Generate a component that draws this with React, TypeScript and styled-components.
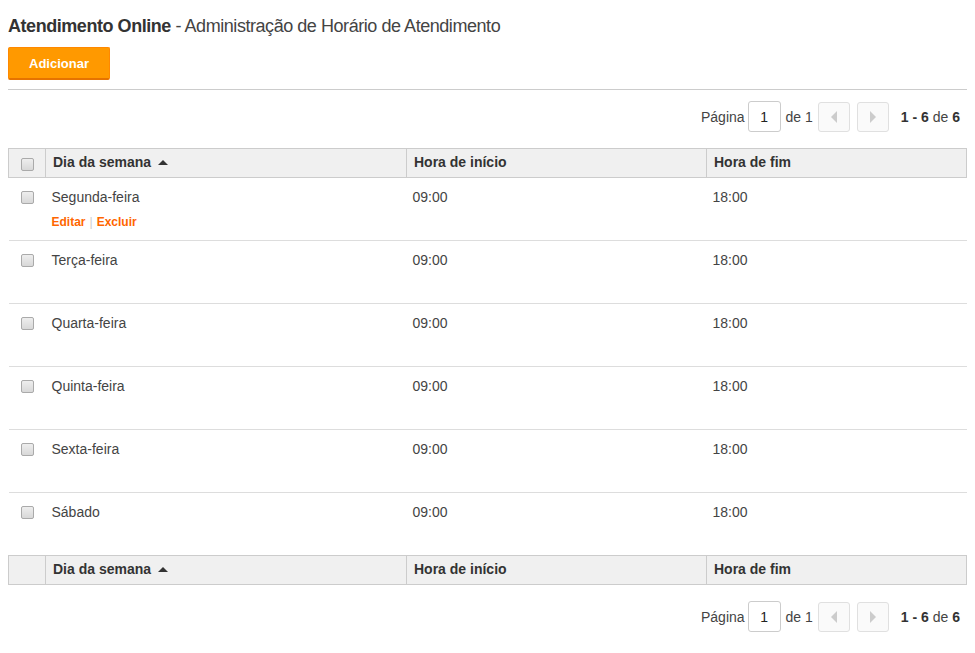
import React from "react";
import styled, { createGlobalStyle } from "styled-components";

const Global = createGlobalStyle`
  body {
    margin: 8px;
    font-family: "Liberation Sans", Arial, sans-serif;
    color: #444;
    background: #fff;
  }
`;

const Title = styled.h1`
  margin: 7px 0 0;
  font-size: 18px;
  font-weight: normal;
  line-height: 22px;
  color: #444;
  letter-spacing: -0.45px;
  b { font-weight: bold; color: #333; }
`;

const AddButton = styled.button`
  margin-top: 10px;
  width: 102px;
  height: 33px;
  background: #f90;
  border: 1px solid #f80;
  border-bottom: 2px solid #e67300;
  border-radius: 2px;
  color: #fff;
  font-family: "Liberation Sans", Arial, sans-serif;
  font-weight: bold;
  font-size: 13px;
  padding: 0;
  display: block;
`;

const Divider = styled.hr`
  margin: 9px 0 0;
  border: 0;
  border-top: 1px solid #ccc;
`;

const Pager = styled.div<{ $top: number }>`
  display: flex;
  justify-content: flex-end;
  align-items: center;
  gap: 4px;
  margin-top: ${p => p.$top}px;
  padding-right: 7px;
  font-size: 14px;
  color: #444;
  height: 31px;
`;

const PageLabel = styled.span`
  margin-right: -1px;
`;

const PageInput = styled.div`
  width: 31px;
  height: 29px;
  border: 1px solid #ccc;
  border-radius: 3px;
  display: flex;
  align-items: center;
  justify-content: center;
  color: #222;
  font-size: 14px;
  margin-right: 1px;
`;

const NavButton = styled.div<{ $gap?: number }>`
  width: 30px;
  height: 28px;
  border: 1px solid #e0e0e0;
  border-radius: 3px;
  background: #fafafa;
  display: flex;
  align-items: center;
  justify-content: center;
  margin-left: ${p => p.$gap ?? 0}px;
`;

const Count = styled.span`
  margin-left: 8px;
  b { font-weight: bold; color: #333; }
`;

const Table = styled.table`
  width: 100%;
  border-collapse: collapse;
  table-layout: fixed;
  margin-top: 16px;
`;

const Th = styled.th`
  background: #f0f0f0;
  border: 1px solid #ccc;
  height: 28px;
  padding: 0 7px;
  text-align: left;
  font-size: 14px;
  font-weight: bold;
  color: #333;
  vertical-align: top;
  line-height: 26px;
`;

const ThCheck = styled(Th)`
  padding: 0;
  text-align: center;
  vertical-align: middle;
`;

const Tr = styled.tr`
  border-bottom: 1px solid #ddd;
  &:last-child { border-bottom: 0; }
`;

const Td = styled.td`
  height: 51px;
  padding: 11px 6px 0;
  vertical-align: top;
  font-size: 14px;
  line-height: 17px;
  color: #444;
`;

const TdCheck = styled(Td)`
  height: 52px;
  padding: 10px 0 0;
  text-align: center;
`;

const Check = styled.span`
  display: inline-block;
  width: 11px;
  height: 11px;
  border: 1px solid #aaa;
  border-radius: 2px;
  background: linear-gradient(#eee, #d8d8d8);
  vertical-align: middle;
  box-sizing: content-box;
`;

const Actions = styled.div`
  margin-top: 9px;
  font-size: 12px;
  font-weight: bold;
  color: #f60;
  line-height: 14px;
  a { color: #f60; text-decoration: none; }
  span { color: #ccc; font-weight: normal; margin: 0 4px; }
`;

const SortArrow = () => (
  <svg width="10" height="6" viewBox="0 0 10 6" style={{ marginLeft: 7, verticalAlign: 1 }}>
    <polygon points="0,5 5,0 10,5" fill="#333" />
  </svg>
);

const Tri = ({ dir }: { dir: "l" | "r" }) => (
  <svg width="6" height="12" viewBox="0 0 6 12">
    <polygon points={dir === "l" ? "6,0 0,6 6,12" : "0,0 6,6 0,12"} fill="#ccc" />
  </svg>
);

const Pagination = ({ top }: { top: number }) => (
  <Pager $top={top}>
    <PageLabel>Página</PageLabel>
    <PageInput>1</PageInput>
    <span>de 1</span>
    <NavButton $gap={1}><Tri dir="l" /></NavButton>
    <NavButton $gap={3}><Tri dir="r" /></NavButton>
    <Count><b>1 - 6</b> de <b>6</b></Count>
  </Pager>
);

const days = ["Segunda-feira", "Terça-feira", "Quarta-feira", "Quinta-feira", "Sexta-feira", "Sábado"];

const Head = ({ check }: { check: boolean }) => (
  <tr>
    <ThCheck>{check && <Check />}</ThCheck>
    <Th>Dia da semana<SortArrow /></Th>
    <Th>Hora de início</Th>
    <Th>Hora de fim</Th>
  </tr>
);

export default function App() {
  return (
    <>
      <Global />
      <Title><b>Atendimento Online</b> - Administração de Horário de Atendimento</Title>
      <AddButton>Adicionar</AddButton>
      <Divider />
      <Pagination top={11} />
      <Table>
        <colgroup>
          <col style={{ width: 37 }} />
          <col style={{ width: 361 }} />
          <col style={{ width: 300 }} />
          <col />
        </colgroup>
        <thead><Head check /></thead>
        <tbody>
          {days.map((d, i) => (
            <Tr key={d}>
              <TdCheck><Check /></TdCheck>
              <Td>
                {d}
                {i === 0 && (
                  <Actions><a>Editar</a><span>|</span><a>Excluir</a></Actions>
                )}
              </Td>
              <Td>09:00</Td>
              <Td>18:00</Td>
            </Tr>
          ))}
        </tbody>
        <tfoot><Head check={false} /></tfoot>
      </Table>
      <Pagination top={16} />
    </>
  );
}
